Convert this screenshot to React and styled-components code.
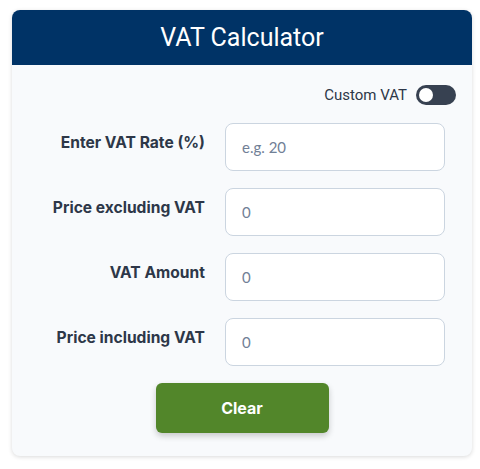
import React, { useState } from 'react';
import styled, { createGlobalStyle } from 'styled-components';

const GlobalStyle = createGlobalStyle`
    body {
        margin: 0;
        background: #ffffff;
        font-family: Roboto, "Liberation Sans", sans-serif;
    }
`;

const App = () => {
    const [custom, setCustom] = useState(false);
    const [rate, setRate] = useState('');
    const [net, setNet] = useState('');
    const [vat, setVat] = useState('');
    const [gross, setGross] = useState('');

    const clear = () => {
        setRate('');
        setNet('');
        setVat('');
        setGross('');
    };

    return (
        <>
            <GlobalStyle />
            <Page>
                <Card>
                    <Header>VAT Calculator</Header>
                    <Body>
                        <ToggleRow>
                            <ToggleLabel>Custom VAT</ToggleLabel>
                            <Switch $on={custom} onClick={() => setCustom(!custom)}>
                                <Knob $on={custom} />
                            </Switch>
                        </ToggleRow>
                        <Form>
                            <Label>Enter VAT Rate (%)</Label>
                            <Input placeholder="e.g. 20" value={rate} onChange={(e) => setRate(e.target.value)} />
                            <Label>Price excluding VAT</Label>
                            <Input placeholder="0" value={net} onChange={(e) => setNet(e.target.value)} />
                            <Label>VAT Amount</Label>
                            <Input placeholder="0" value={vat} onChange={(e) => setVat(e.target.value)} />
                            <Label>Price including VAT</Label>
                            <Input placeholder="0" value={gross} onChange={(e) => setGross(e.target.value)} />
                        </Form>
                        <Actions>
                            <ClearButton onClick={clear}>Clear</ClearButton>
                        </Actions>
                    </Body>
                </Card>
            </Page>
        </>
    );
};

const Page = styled.div`
    padding: 10px 8px 12px 12px;
`;

const Card = styled.div`
    width: 460px;
    background: #f8fafc;
    border-radius: 8px;
    overflow: hidden;
    box-shadow: 0 1px 4px rgba(0, 0, 0, 0.15);
`;

const Header = styled.div`
    height: 55px;
    background: #003366;
    color: #ffffff;
    font-size: 25px;
    display: flex;
    align-items: center;
    justify-content: center;
`;

const Body = styled.div`
    padding: 20px 16px 23px;
`;

const ToggleRow = styled.div`
    display: flex;
    justify-content: flex-end;
    align-items: center;
    gap: 9px;
`;

const ToggleLabel = styled.span`
    font-size: 15px;
    color: #2d3748;
`;

const Switch = styled.div`
    width: 40px;
    height: 20px;
    border-radius: 10px;
    background: ${(p) => (p.$on ? '#52862a' : '#374151')};
    display: flex;
    align-items: center;
    padding: 0 3px;
    box-sizing: border-box;
    cursor: pointer;
`;

const Knob = styled.div`
    width: 14px;
    height: 14px;
    border-radius: 50%;
    background: #ffffff;
    margin-left: ${(p) => (p.$on ? '20px' : '0')};
`;

const Form = styled.div`
    margin: 18px 11px 0 11px;
    display: grid;
    grid-template-columns: 1fr 220px;
    column-gap: 20px;
    row-gap: 17px;
`;

const Label = styled.label`
    font-family: Inter, "Liberation Sans", sans-serif;
    font-size: 15.6px;
    font-weight: 700;
    color: #2d3748;
    text-align: right;
    padding-top: 10px;
`;

const Input = styled.input`
    height: 48px;
    box-sizing: border-box;
    border: 1px solid #cbd5e0;
    border-radius: 8px;
    background: #ffffff;
    padding: 0 16px;
    font-family: Lato, "Liberation Sans", sans-serif;
    font-size: 15px;
    color: #2d3748;
    outline: none;
    &::placeholder {
        color: #718096;
    }
`;

const Actions = styled.div`
    display: flex;
    justify-content: center;
    margin-top: 17px;
`;

const ClearButton = styled.button`
    width: 173px;
    height: 50px;
    border: none;
    border-radius: 6px;
    background: #52862a;
    color: #ffffff;
    font-family: Inter, "Liberation Sans", sans-serif;
    font-size: 16px;
    font-weight: 700;
    box-shadow: 0 3px 6px rgba(0, 0, 0, 0.2);
    cursor: pointer;
`;

export default App;
